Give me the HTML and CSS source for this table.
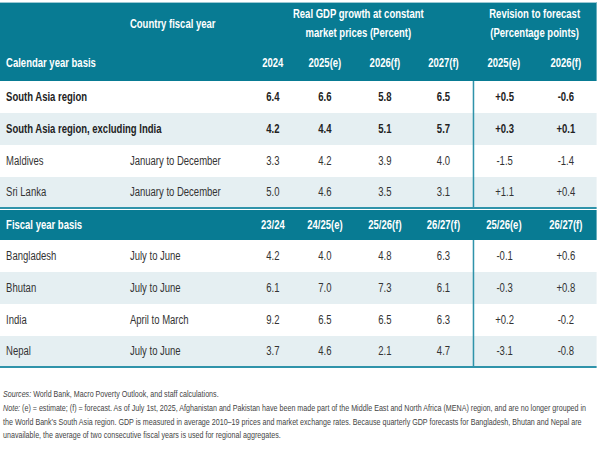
FILE: index.html
```html
<!DOCTYPE html>
<html>
<head>
<meta charset="utf-8">
<link rel="stylesheet" href="styles.css">
</head>
<body>
<div class="page">
<div class="sheet">
<div class="table">
  <div class="head">
    <div class="row h1">
      <div></div>
      <div class="c2">Country fiscal year</div>
      <div class="span4">Real GDP growth at constant<br>market prices (Percent)</div>
      <div class="span2">Revision to forecast<br>(Percentage points)</div>
    </div>
    <div class="row h2">
      <div class="lab">Calendar year basis</div>
      <div></div>
      <div class="n">2024</div>
      <div class="n">2025(e)</div>
      <div class="n">2026(f)</div>
      <div class="n c6">2027(f)</div>
      <div class="n">2025(e)</div>
      <div class="n">2026(f)</div>
    </div>
  </div>
  <div class="row b bold">
    <div class="lab">South Asia region</div><div></div>
    <div class="n">6.4</div><div class="n">6.6</div><div class="n">5.8</div><div class="n c6">6.5</div>
    <div class="n d">+0.5</div><div class="n">-0.6</div>
  </div>
  <div class="row b bold alt">
    <div class="lab">South Asia region, excluding India</div><div></div>
    <div class="n">4.2</div><div class="n">4.4</div><div class="n">5.1</div><div class="n c6">5.7</div>
    <div class="n d">+0.3</div><div class="n">+0.1</div>
  </div>
  <div class="row b">
    <div class="lab">Maldives</div><div class="c2">January to December</div>
    <div class="n">3.3</div><div class="n">4.2</div><div class="n">3.9</div><div class="n c6">4.0</div>
    <div class="n d">-1.5</div><div class="n">-1.4</div>
  </div>
  <div class="row b alt last">
    <div class="lab">Sri Lanka</div><div class="c2">January to December</div>
    <div class="n">5.0</div><div class="n">4.6</div><div class="n">3.5</div><div class="n c6">3.1</div>
    <div class="n d">+1.1</div><div class="n">+0.4</div>
  </div>
  <div class="row h3">
    <div class="lab">Fiscal year basis</div><div></div>
    <div class="n">23/24</div><div class="n">24/25(e)</div><div class="n">25/26(f)</div><div class="n c6">26/27(f)</div>
    <div class="n">25/26(e)</div><div class="n">26/27(f)</div>
  </div>
  <div class="row b">
    <div class="lab">Bangladesh</div><div class="c2">July to June</div>
    <div class="n">4.2</div><div class="n">4.0</div><div class="n">4.8</div><div class="n c6">6.3</div>
    <div class="n d">-0.1</div><div class="n">+0.6</div>
  </div>
  <div class="row b alt">
    <div class="lab">Bhutan</div><div class="c2">July to June</div>
    <div class="n">6.1</div><div class="n">7.0</div><div class="n">7.3</div><div class="n c6">6.1</div>
    <div class="n d">-0.3</div><div class="n">+0.8</div>
  </div>
  <div class="row b">
    <div class="lab">India</div><div class="c2">April to March</div>
    <div class="n">9.2</div><div class="n">6.5</div><div class="n">6.5</div><div class="n c6">6.3</div>
    <div class="n d">+0.2</div><div class="n">-0.2</div>
  </div>
  <div class="row b alt last">
    <div class="lab">Nepal</div><div class="c2">July to June</div>
    <div class="n">3.7</div><div class="n">4.6</div><div class="n">2.1</div><div class="n c6">4.7</div>
    <div class="n d">-3.1</div><div class="n">-0.8</div>
  </div>
</div>
<div class="notes">
  <p class="src"><i>Sources:</i> World Bank, Macro Poverty Outlook, and staff calculations.</p>
  <p><i>Note:</i> (e) = estimate; (f) = forecast. As of July 1st, 2025, Afghanistan and Pakistan have been made part of the Middle East and North Africa (MENA) region, and are no longer grouped in the World Bank’s South Asia region. GDP is measured in average 2010–19 prices and market exchange rates. Because quarterly GDP forecasts for Bangladesh, Bhutan and Nepal are unavailable, the average of two consecutive fiscal years is used for regional aggregates.</p>
</div>
</div>
</div>
</body>
</html>
```
FILE: styles.css
```css
* { box-sizing: border-box; }
body {
  margin: 0;
  background: #fff;
  font-family: "Liberation Sans", Arial, sans-serif;
  color: #333;
}
.page {
  width: 600px;
  overflow: hidden;
}
/* condensed typeface emulation: the sheet is laid out wide and narrowed */
.sheet {
  width: 785px;
  transform: scaleX(0.76);
  transform-origin: 0 0;
}
.table {
  width: 785px;
  margin-top: 2px;
}
.row {
  display: grid;
  grid-template-columns: 166px 155px 76px 61px 97px 67px 82px 81px;
  align-items: center;
}
.head {
  background: #087b93;
  border-top: 1px solid #9cc9d4;
  color: #fff;
  font-weight: bold;
  font-size: 12.5px;
}
.h1 { height: 42px; line-height: 19px; }
.h1 .span4 { grid-column: 3 / 7; text-align: center; }
.h1 .span2 { grid-column: 7 / 9; text-align: center; }
.h2 { height: 36px; }
.h3 {
  height: 30px;
  background: #087b93;
  color: #fff;
  font-weight: bold;
  font-size: 12.5px;
  margin-top: 1px;
}
.c2 { padding-left: 5px; white-space: nowrap; }
.lab { padding-left: 8px; white-space: nowrap; }
.n { text-align: center; }
.c6 { padding-right: 10px; }
.b {
  height: 32px;
  font-size: 12.5px;
}
.b > div { height: 100%; display: flex; align-items: center; }
.b > .n { justify-content: center; }
.b > .d { border-left: 2.5px solid #2f93aa; }
.bold { font-weight: bold; color: #222; }
.alt { background: #e5eff2; }
.last { height: 32px; border-bottom: 2px solid #2f93aa; }
.notes {
  width: 785px;
  padding: 19px 2px 0 4px;
  font-size: 9.4px;
  color: #444;
  line-height: 13.4px;
}
.notes p { margin: 0; }
.notes .src { margin-bottom: 1px; }
```
